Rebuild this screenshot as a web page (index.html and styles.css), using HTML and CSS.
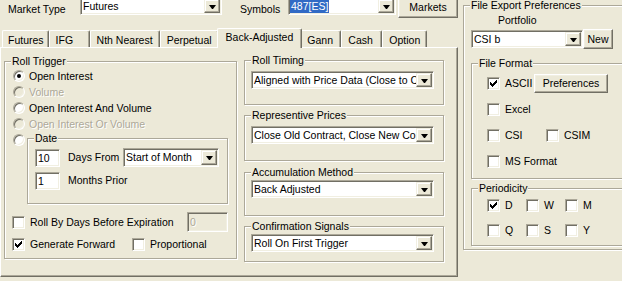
FILE: index.html
```html
<!DOCTYPE html>
<html lang="en">
<head>
    <meta charset="UTF-8">
    <title>Back-Adjusted</title>
    <link rel="stylesheet" href="styles.css">
</head>
<body>

<div class="app">
    <div class="main">
        <div class="topbar">
            <span class="lbl market-lbl">Market Type</span>
            <div class="combo combo-market"><span class="combo-text">Futures</span><span class="drop"></span></div>
            <span class="lbl symbols-lbl">Symbols</span>
            <div class="combo combo-symbols"><span class="combo-text"><span class="sel">487[ES]</span></span><span class="drop"></span></div>
            <button class="btn btn-markets">Markets</button>
        </div>

        <div class="tabs">
            <div class="tab tab-futures">Futures</div>
            <div class="tab">IFG</div>
            <div class="tab">Nth Nearest</div>
            <div class="tab">Perpetual</div>
            <div class="tab active">Back-Adjusted</div>
            <div class="tab">Gann</div>
            <div class="tab">Cash</div>
            <div class="tab">Option</div>
        </div>

        <div class="panel">
            <div class="group roll-trigger">
                <span class="legend">Roll Trigger</span>
                <div class="opt"><span class="radio on"></span><span>Open Interest</span></div>
                <div class="opt"><span class="radio off"></span><span class="dis">Volume</span></div>
                <div class="opt"><span class="radio"></span><span>Open Interest And Volume</span></div>
                <div class="opt"><span class="radio off"></span><span class="dis">Open Interest Or Volume</span></div>
                <div class="date-row">
                    <span class="radio"></span>
                    <div class="group date-group">
                        <span class="legend">Date</span>
                        <div class="date-line">
                            <div class="edit">10</div>
                            <span class="date-lbl">Days From</span>
                            <div class="combo combo-month"><span class="combo-text">Start of Month</span><span class="drop"></span></div>
                        </div>
                        <div class="date-line second">
                            <div class="edit">1</div>
                            <span class="date-lbl">Months Prior</span>
                        </div>
                    </div>
                </div>
                <div class="days-row">
                    <span class="chk"><span class="check"></span><span>Roll By Days Before Expiration</span></span>
                    <div class="edit edit-days dis">0</div>
                </div>
                <div class="forward-row">
                    <span class="chk chk-forward">
                        <span class="check"><svg viewBox="0 0 7 7"><path d="M6 0h1v1h-1z M5 1h2v1h-2z M0 2h1v1h-1z M4 2h3v1h-3z M0 3h2v1h-2z M3 3h3v1h-3z M0 4h5v1h-5z M1 5h3v1h-3z M2 6h1v1h-1z"/></svg></span>
                        <span>Generate Forward</span>
                    </span>
                    <span class="chk"><span class="check"></span><span>Proportional</span></span>
                </div>
            </div>

            <div class="col-right">
                <div class="group combo-group rt">
                    <span class="legend">Roll Timing</span>
                    <div class="combo"><span class="combo-text">Aligned with Price Data (Close to Close)</span><span class="drop"></span></div>
                </div>
                <div class="group combo-group rp">
                    <span class="legend">Representive Prices</span>
                    <div class="combo"><span class="combo-text">Close Old Contract, Close New Contract</span><span class="drop"></span></div>
                </div>
                <div class="group combo-group am">
                    <span class="legend">Accumulation Method</span>
                    <div class="combo"><span class="combo-text">Back Adjusted</span><span class="drop"></span></div>
                </div>
                <div class="group combo-group cs">
                    <span class="legend">Confirmation Signals</span>
                    <div class="combo"><span class="combo-text">Roll On First Trigger</span><span class="drop"></span></div>
                </div>
            </div>
        </div>
    </div>

    <div class="group export">
        <span class="legend">File Export Preferences</span>
        <div class="portfolio-lbl">Portfolio</div>
        <div class="port-row">
            <div class="combo combo-portfolio"><span class="combo-text">CSI b</span><span class="drop"></span></div>
            <button class="btn btn-new">New</button>
        </div>

        <div class="group format-group">
            <span class="legend">File Format</span>
            <div class="fmt-row">
                <span class="chk chk-ascii">
                    <span class="check"><svg viewBox="0 0 7 7"><path d="M6 0h1v1h-1z M5 1h2v1h-2z M0 2h1v1h-1z M4 2h3v1h-3z M0 3h2v1h-2z M3 3h3v1h-3z M0 4h5v1h-5z M1 5h3v1h-3z M2 6h1v1h-1z"/></svg></span>
                    <span>ASCII</span>
                </span>
                <button class="btn btn-prefs">Preferences</button>
            </div>
            <div class="fmt-row">
                <span class="chk"><span class="check"></span><span>Excel</span></span>
            </div>
            <div class="fmt-row">
                <span class="chk chk-csi"><span class="check"></span><span>CSI</span></span>
                <span class="chk"><span class="check"></span><span>CSIM</span></span>
            </div>
            <div class="fmt-row">
                <span class="chk"><span class="check"></span><span>MS Format</span></span>
            </div>
        </div>

        <div class="group period-group">
            <span class="legend">Periodicity</span>
            <div class="period-row">
                <span class="chk chk-period">
                    <span class="check"><svg viewBox="0 0 7 7"><path d="M6 0h1v1h-1z M5 1h2v1h-2z M0 2h1v1h-1z M4 2h3v1h-3z M0 3h2v1h-2z M3 3h3v1h-3z M0 4h5v1h-5z M1 5h3v1h-3z M2 6h1v1h-1z"/></svg></span>
                    <span>D</span>
                </span>
                <span class="chk chk-period"><span class="check"></span><span>W</span></span>
                <span class="chk chk-period"><span class="check"></span><span>M</span></span>
            </div>
            <div class="period-row">
                <span class="chk chk-period"><span class="check"></span><span>Q</span></span>
                <span class="chk chk-period"><span class="check"></span><span>S</span></span>
                <span class="chk chk-period"><span class="check"></span><span>Y</span></span>
            </div>
        </div>
    </div>
</div>

</body>
</html>
```

FILE: styles.css
```css
/* Dasar */
* {
    margin: 0;
    padding: 0;
    box-sizing: border-box;
}

html, body {
    overflow: hidden;
}

body {
    width: 622px;
    height: 281px;
    background-color: #ece9d8;
    font-family: "Liberation Sans", Arial, sans-serif;
    font-size: 10.5px;
    line-height: 13px;
    color: #000;
}

.app {
    display: flex;
    align-items: flex-start;
    width: 640px;
}

.main {
    width: 458px;
    flex: none;
}

/* Baris atas */
.topbar {
    display: flex;
    height: 21px;
    margin-top: -3px;
}

.lbl {
    padding-top: 6px;
    white-space: nowrap;
}

.market-lbl {
    width: 80px;
    padding-left: 8px;
}

.symbols-lbl {
    width: 48px;
    margin-left: 18px;
}

.combo-market {
    width: 142px;
}

.combo-symbols {
    width: 108px;
}

.btn {
    font: inherit;
    color: #000;
    background-color: #ece9d8;
    border: 1px solid;
    border-color: #fff #716f64 #716f64 #fff;
    box-shadow: inset -1px -1px #aca899, inset 1px 1px #f1efe2;
}

.btn-markets {
    width: 60px;
    margin-left: 2px;
}

/* Combo dan edit */
.combo {
    display: flex;
    height: 18px;
    padding: 1px;
    background-color: #fff;
    border: 1px solid;
    border-color: #aca899 #fff #fff #aca899;
    box-shadow: inset 1px 1px #716f64, inset -1px -1px #f1efe2;
}

.combo-text {
    flex: 1;
    min-width: 0;
    overflow: hidden;
    white-space: nowrap;
    padding-left: 1px;
    display: flex;
    align-items: center;
}

.sel {
    background-color: #316ac5;
    color: #fff;
    padding: 0 1px;
    line-height: 15px;
    margin-left: -1px;
}

.drop {
    width: 16px;
    flex: none;
    display: flex;
    align-items: center;
    justify-content: center;
    background-color: #ece9d8;
    border: 1px solid;
    border-color: #f1efe2 #716f64 #716f64 #f1efe2;
    box-shadow: inset -1px -1px #aca899, inset 1px 1px #fff;
}

.drop::after {
    content: "";
    width: 1px;
    height: 0;
    border-top: 4px solid #000;
    border-left: 3px solid transparent;
    border-right: 3px solid transparent;
    margin-top: 1px;
}

.edit {
    width: 25px;
    height: 18px;
    flex: none;
    padding-left: 2px;
    line-height: 16px;
    background-color: #fff;
    border: 1px solid;
    border-color: #aca899 #fff #fff #aca899;
    box-shadow: inset 1px 1px #716f64, inset -1px -1px #f1efe2;
}

/* Tab */
.tabs {
    display: flex;
    align-items: flex-end;
    height: 19px;
    margin-top: 10px;
    padding-left: 2px;
    position: relative;
    z-index: 1;
}

.tab {
    height: 17px;
    min-width: 41px;
    padding: 3px 6px 0;
    white-space: nowrap;
    border: 1px solid;
    border-bottom: 0;
    border-color: #fff #716f64 #fff #fff;
    border-radius: 2px 2px 0 0;
    box-shadow: inset -1px 0 #aca899;
}

.tab-futures {
    padding: 3px 4px 0 5px;
}

.tab.active {
    height: 20px;
    margin: 0 -2px -1px;
    padding: 2px 8px 0;
    background-color: #ece9d8;
    position: relative;
}

.panel {
    display: flex;
    align-items: flex-start;
    height: 230px;
    padding: 12px 0 0 3px;
    border: 1px solid;
    border-color: #fff #716f64 #716f64 #fff;
    box-shadow: inset -1px -1px #aca899;
}

/* Group box */
.group {
    position: relative;
    border: 1px solid #aca899;
    box-shadow: inset 1px 1px #fff, 1px 1px #fff;
}

.legend {
    position: absolute;
    top: -7px;
    left: 6px;
    padding: 0 1px;
    line-height: 12px;
    background-color: #ece9d8;
    white-space: nowrap;
}

.roll-trigger {
    width: 233px;
    height: 198px;
    margin-top: 1px;
    padding: 6px 8px 0 7px;
    flex: none;
}

.opt {
    display: flex;
    align-items: center;
    gap: 4px;
    height: 16px;
}

.radio {
    position: relative;
    width: 12px;
    height: 12px;
    margin-left: 1px;
    flex: none;
    border-radius: 50%;
    background-color: #fff;
    border: 1px solid;
    border-color: #aca899 #fff #fff #aca899;
    box-shadow: inset 1px 1px #716f64, inset -1px -1px #f1efe2;
}

.radio.off {
    background-color: #ece9d8;
}

.radio.on::after {
    content: "";
    position: absolute;
    left: 3px;
    top: 3px;
    width: 4px;
    height: 4px;
    border-radius: 50%;
    background-color: #000;
}

.dis {
    color: #aca899;
    text-shadow: 1px 1px #fff;
}

.date-row {
    display: flex;
    align-items: flex-start;
}

.date-row .radio {
    margin-top: 2px;
}

.date-group {
    flex: 1;
    height: 66px;
    margin: 6px 0 0 2px;
    padding: 9px 0 0 7px;
}

.date-line {
    display: flex;
    align-items: center;
    height: 19px;
}

.date-line.second {
    margin-top: 4px;
}

.date-lbl {
    width: 63px;
    padding-left: 8px;
    white-space: nowrap;
}

.combo-month {
    width: 96px;
    height: 19px;
}

.days-row {
    display: flex;
    align-items: center;
    height: 20px;
    margin-top: 8px;
}

.edit-days {
    width: 41px;
    height: 20px;
    margin-left: auto;
    background-color: #ece9d8;
    line-height: 18px;
}

.forward-row {
    display: flex;
    align-items: center;
    height: 16px;
    margin-top: 4px;
}

.chk {
    display: flex;
    align-items: center;
    gap: 5px;
    white-space: nowrap;
}

.chk-forward {
    width: 120px;
}

.check {
    width: 13px;
    height: 13px;
    flex: none;
    padding: 2px;
    background-color: #fff;
    border: 1px solid;
    border-color: #aca899 #fff #fff #aca899;
    box-shadow: inset 1px 1px #716f64, inset -1px -1px #f1efe2;
}

.check svg {
    display: block;
    width: 7px;
    height: 7px;
    shape-rendering: crispEdges;
}

/* Kolom kanan panel */
.col-right {
    width: 200px;
    margin-left: 7px;
    display: flex;
    flex-direction: column;
}

.combo-group {
    padding: 10px 9px 0 6px;
}

.rt {
    height: 45px;
}

.rp {
    height: 46px;
    margin-top: 10px;
}

.am {
    height: 44px;
    margin-top: 11px;
    padding-top: 7px;
}

.cs {
    height: 36px;
    margin-top: 10px;
    padding-top: 7px;
}

/* File export */
.export {
    width: 170px;
    height: 245px;
    flex: none;
    margin: 5px 0 0 5px;
    padding: 8px 6px 0 7px;
}

.portfolio-lbl {
    padding-left: 27px;
}

.port-row {
    display: flex;
    align-items: center;
    height: 20px;
    margin-top: 2px;
}

.combo-portfolio {
    width: 112px;
}

.btn-new {
    width: 30px;
    height: 20px;
}

.format-group {
    height: 116px;
    margin-top: 14px;
    padding: 6px 0 0 15px;
}

.fmt-row {
    display: flex;
    align-items: center;
    height: 26px;
}

.chk-ascii {
    width: 47px;
}

.chk-csi {
    width: 59px;
}

.btn-prefs {
    width: 74px;
    height: 19px;
}

.period-group {
    height: 58px;
    margin-top: 9px;
    padding: 4px 0 0 15px;
}

.period-row {
    display: flex;
    align-items: center;
    height: 25px;
}

.chk-period {
    width: 39px;
}
```
